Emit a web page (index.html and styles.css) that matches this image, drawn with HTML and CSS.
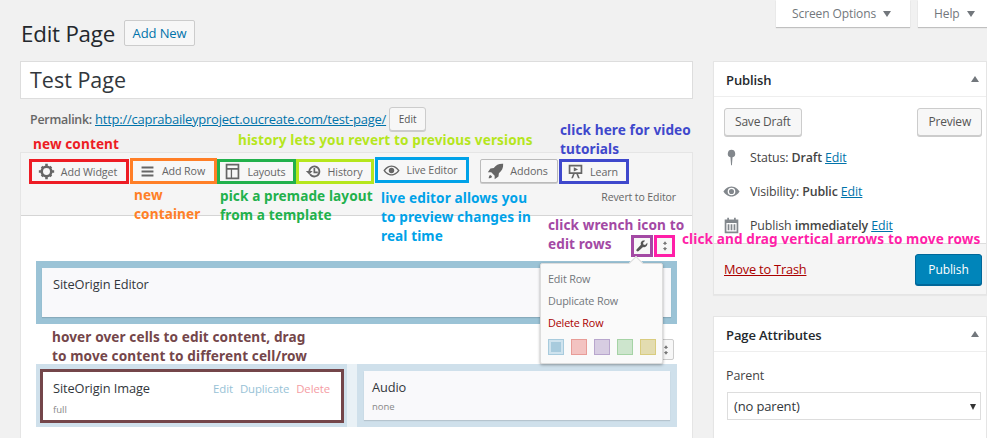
FILE: index.html
```html
<!DOCTYPE html>
<html lang="en">
<head>
<meta charset="utf-8">
<title>Edit Page</title>
<link rel="stylesheet" href="styles.css">
</head>
<body>
<div class="page">
  <div class="tabs">
    <div class="tab tab-screen">Screen Options <span class="caret"></span></div>
    <div class="tab tab-help">Help <span class="caret"></span></div>
  </div>
  <div class="head">
    <h1>Edit Page</h1>
    <a class="add-new">Add New</a>
  </div>
  <div class="columns">
    <main class="left">
      <div class="title-input">Test Page</div>
      <div class="permalink">
        <b>Permalink:</b> <a class="link">http://caprabaileyproject.oucreate.com/test-page/</a>
        <span class="small-btn">Edit</span>
      </div>
      <section class="builder">
        <div class="toolbar">
          <div class="tools">
            <span class="tool t-red">
              <svg class="ico" viewBox="0 0 20 20"><circle cx="10" cy="10" r="5.600" fill="none" stroke="#666" stroke-width="3"/><path d="M8.500 1h3v3h-3zM8.500 16h3v3h-3zM1 8.500h3v3H1zM16 8.500h3v3h-3zM3.300 5.400l2.100-2.100 2 2-2.100 2.100zM12.600 14.700l2.100-2.100 2 2-2.100 2.100zM14.600 3.300l2.100 2.100-2 2-2.100-2.100zM5.300 12.600l2.100 2.100-2 2-2.100-2.100z"/></svg>
              Add Widget</span>
            <span class="tool t-orange">
              <svg class="ico" viewBox="0 0 20 20"><path d="M3 4h14v2.400H3zM3 8.800h14v2.400H3zM3 13.600h14V16H3z"/></svg>
              Add Row</span>
            <span class="tool t-green">
              <svg class="ico" viewBox="0 0 20 20"><path d="M2 1h16v18H2zM4 3v3h12V3zM4 8v9h4V8zM9.500 8v9H16V8z" fill-rule="evenodd"/></svg>
              Layouts</span>
            <span class="tool t-lime">
              <svg class="ico" viewBox="0 0 20 20"><path d="M11 3a7 7 0 1 1-6 10.600l1.900-1.100A4.800 4.800 0 1 0 6.200 9.500H9L5 13.500 1 9.500h3A7 7 0 0 1 11 3zM10 6h2v4h3v2h-5z"/></svg>
              History</span>
            <span class="tool t-blue">
              <svg class="ico" viewBox="0 0 20 20"><path d="M10 4c4.500 0 8 3.500 9.500 6-1.500 2.500-5 6-9.500 6S2 12.500.5 10C2 7.500 5.500 4 10 4zm0 1.500C7 5.500 4 7.800 2.500 10 4 12.200 7 14.500 10 14.500s6-2.300 7.500-4.500C16 7.800 13 5.500 10 5.500zM10 6.800a3.200 3.200 0 1 1 0 6.400 3.200 3.200 0 0 1 0-6.400z" fill-rule="evenodd"/></svg>
              Live Editor</span>
            <span class="tool t-addons">
              <svg class="ico" viewBox="0 0 20 20"><path d="M19 1c.300 5-1.500 8.500-5 11l-.5 4-4.500 3v-4L5 11H1l3-4.500 4-.5c2.500-3.500 6-5.300 11-5zM3.500 14c1 0 2.500 1.500 2.500 2.500-1 1-2.500 1.500-4 1.500 0-1.500.5-3 1.500-4z"/></svg>
              Addons</span>
            <span class="tool t-indigo">
              <svg class="ico" viewBox="0 0 20 20"><path d="M2 2h16v11h-5l2 5h-2l-2-5H9l-2 5H5l2-5H2zM4 4v7h12V4zM8 5l5 2.500L8 10z" fill-rule="evenodd"/></svg>
              Learn</span>
          </div>
          <div class="revert">Revert to Editor</div>
        </div>
        <div class="rows">
          <div class="row-head row-head-first">
            <span class="row-ico r-wrench">
              <svg viewBox="0 0 20 20"><path d="M17.500 5.500l-3 3-2.500-.5-.5-2.500 3-3c-2-.7-4.500-.2-5.500 1.500-1 1.500-1 2.800-.5 4.200L2.500 14.500c-.8.800-.8 2 0 2.800s2 .8 2.800 0l6.200-6c1.400.5 2.800.5 4.200-.5 1.700-1.100 2.500-3.500 1.800-5.800z"/></svg>
            </span>
            <span class="row-ico r-arrows">
              <svg viewBox="0 0 20 20"><path d="M10 2l3.500 4.500H11v2H9v-2H6.500zM10 18l-3.500-4.500H9v-2h2v2h2.500z"/></svg>
            </span>
          </div>
          <div class="grid-row strong">
            <div class="cell cell-full">
              <div class="widget widget-tall"><div class="w-title">SiteOrigin Editor</div></div>
            </div>
          </div>
          <div class="row-head row-head-second">
            <span class="row-ico plain">
              <svg viewBox="0 0 20 20"><path d="M10 2l3.500 4.500H11v2H9v-2H6.500zM10 18l-3.500-4.500H9v-2h2v2h2.500z"/></svg>
            </span>
          </div>
          <div class="grid-row pale">
            <div class="cell cell-a">
              <div class="widget widget-marked">
                <div class="w-line">
                  <div class="w-title">SiteOrigin Image</div>
                  <div class="w-actions"><span>Edit</span><span>Duplicate</span><span class="del">Delete</span></div>
                </div>
                <div class="w-sub">full</div>
              </div>
            </div>
            <div class="cell cell-b">
              <div class="widget">
                <div class="w-title">Audio</div>
                <div class="w-sub">none</div>
              </div>
            </div>
          </div>
        </div>
      </section>
    </main>
    <aside class="side">
      <section class="box box-publish">
        <h2>Publish <span class="up"></span></h2>
        <div class="pub-actions">
          <span class="btn">Save Draft</span>
          <span class="btn">Preview</span>
        </div>
        <div class="pub-line">
          <svg class="mini" viewBox="0 0 20 20"><path d="M10 1a4.500 4.500 0 0 1 1.200 8.800L10.500 19h-1L8.800 9.800A4.500 4.500 0 0 1 10 1z"/></svg>
          <span>Status: <b>Draft</b> <a class="link">Edit</a></span>
        </div>
        <div class="pub-line">
          <svg class="mini" viewBox="0 0 20 20"><path d="M10 4c4.500 0 8 3.500 9.500 6-1.500 2.500-5 6-9.500 6S2 12.500.5 10C2 7.500 5.500 4 10 4zm0 1.500a4.500 4.500 0 1 0 0 9 4.500 4.500 0 0 0 0-9zM10 7a3 3 0 1 1 0 6 3 3 0 0 1 0-6z" fill-rule="evenodd"/></svg>
          <span>Visibility: <b>Public</b> <a class="link">Edit</a></span>
        </div>
        <div class="pub-line">
          <svg class="mini" viewBox="0 0 20 20"><path d="M2 3h3V1h2v2h6V1h2v2h3v16H2zM4 7v10h12V7zM5.500 8.500h2v7h-2zM9 8.500h2v7H9zM12.500 8.500h2v7h-2z" fill-rule="evenodd"/></svg>
          <span>Publish <b>immediately</b> <a class="link">Edit</a></span>
        </div>
        <div class="pub-foot">
          <a class="trash">Move to Trash</a>
          <span class="primary">Publish</span>
        </div>
      </section>
      <section class="box box-attrs">
        <h2>Page Attributes <span class="up"></span></h2>
        <div class="attrs">
          <div class="attr-label">Parent</div>
          <div class="select">(no parent)<span class="down"></span></div>
        </div>
      </section>
    </aside>
  </div>

  <div class="menu">
    <span class="menu-tip"></span>
    <div class="menu-item">Edit Row</div>
    <div class="menu-item">Duplicate Row</div>
    <div class="menu-item danger">Delete Row</div>
    <div class="swatches">
      <span class="sw sw-blue"></span>
      <span class="sw sw-red"></span>
      <span class="sw sw-purple"></span>
      <span class="sw sw-green"></span>
      <span class="sw sw-yellow"></span>
    </div>
  </div>

  <div class="note n-red">new content</div>
  <div class="note n-lime">history lets you revert to previous versions</div>
  <div class="note n-indigo">click here for video<br>tutorials</div>
  <div class="note n-orange">new<br>container</div>
  <div class="note n-green">pick a premade layout<br>from a template</div>
  <div class="note n-blue">live editor allows you<br>to preview changes in<br>real time</div>
  <div class="note n-purple">click wrench icon to<br>edit rows</div>
  <div class="note n-pink">click and drag vertical arrows to move rows</div>
  <div class="note n-maroon">hover over cells to edit content, drag<br>to move content to different cell/row</div>
</div>
</body>
</html>
```

FILE: styles.css
```css
* { box-sizing: border-box; }
html, body { margin: 0; height: 100%; }
body {
  background: #f1f1f1;
  color: #444;
  font-family: "Open Sans", "Noto Sans", sans-serif;
  font-size: 12px;
  overflow: hidden;
}
.page { position: relative; width: 987px; height: 438px; overflow: hidden; }
a { color: #0073aa; }
.link { color: #0073aa; text-decoration: underline; }

/* top tabs */
.tabs { display: flex; justify-content: flex-end; gap: 8px; height: 27px; }
.tab {
  background: #fff;
  box-shadow: 0 1px 1px rgba(0,0,0,.2);
  color: #72777c;
  font-size: 12px;
  letter-spacing: -.1px;
  line-height: 27px;
  display: flex;
  align-items: center;
  padding-left: 16px;
}
.tab-screen { width: 134px; }
.tab-help { width: 69px; }
.caret {
  display: inline-block;
  margin-left: 7px;
  border: 4px solid transparent;
  border-top: 6px solid #72777c;
  border-bottom: 0;
  width: 0;
}

/* heading */
.head { display: flex; align-items: center; height: 26px; margin: -7px 0 0 21px; }
h1 { margin: 0; font-weight: 400; font-size: 22.300px; line-height: 28px; padding-top: 2px; color: #23282d; letter-spacing: -.2px; }
.add-new {
  margin-left: 9px;
  width: 71px;
  height: 26px;
  border: 1px solid #ccc;
  border-radius: 2px;
  background: #f7f7f7;
  text-align: center;
  line-height: 24px;
  font-size: 13px;
  letter-spacing: -.1px;
  color: #0073aa;
}

/* columns */
.columns { display: flex; gap: 21px; margin: 15px 0 0 20px; align-items: flex-start; }
.left { width: 673px; flex: none; }
.side { width: 273px; flex: none; margin-left: -1px; }

.title-input {
  height: 38px;
  background: #fff;
  border: 1px solid #ddd;
  font-size: 21.500px;
  line-height: 36px;
  padding-left: 9px;
  color: #32373c;
}
.permalink {
  display: flex;
  align-items: center;
  gap: 3px;
  height: 24px;
  margin: 8px 0 0 10px;
  font-size: 13px;
  letter-spacing: -.24px;
  color: #666;
}
.permalink b { font-weight: 600; font-size: 12.400px; letter-spacing: -.24px; }
.small-btn {
  width: 37px;
  height: 24px;
  border: 1px solid #ccc;
  border-radius: 3px;
  background: #f7f7f7;
  box-shadow: 0 1px 0 #ccc;
  text-align: center;
  line-height: 22px;
  font-size: 10px;
  letter-spacing: 0;
  color: #555;
}

/* builder */
.builder {
  margin-top: 21px;
  height: 300px;
  background: #fff;
  border: 1px solid #e5e5e5;
}
.toolbar {
  height: 63px;
  background: #f5f5f5;
  border-bottom: 1px solid #d5d5d5;
  position: relative;
}
.tools { display: flex; align-items: flex-start; padding: 6px 0 0 8px; }
.tool {
  display: flex;
  align-items: center;
  justify-content: center;
  gap: 6px;
  height: 25px;
  border: 3px solid #999;
  background: #f7f7f7;
  color: #666;
  font-size: 10.700px;
  letter-spacing: -.1px;
  padding-right: 3px;
}
.ico { width: 17px; height: 17px; fill: #666; flex: none; }
.t-red { width: 100px; border-color: #ed1c24; }
.t-orange { width: 87px; border-color: #ff7f27; margin-left: 1px; margin-top: -1px; height: 26px; }
.t-green { width: 79px; border-color: #22b14c; }
.t-lime { width: 78px; border-color: #b5e61d; }
.t-blue { width: 94px; border-color: #00a2e8; margin-left: 1px; margin-top: -2px; height: 26px; }
.t-addons { width: 78px; border: 1px solid #bbb; border-radius: 2px; margin-left: 11px; height: 24px; box-shadow: 0 1px 0 #ccc; }
.t-indigo { width: 70px; border-color: #3f48cc; margin-left: 1px; }
.revert {
  position: absolute;
  right: 16px;
  top: 37px;
  font-size: 10.500px;
  letter-spacing: -.1px;
  color: #666;
}

.rows { padding: 0 15px; }
.row-head { display: flex; justify-content: flex-end; align-items: flex-start; }
.row-head-first { height: 45px; padding-top: 19px; padding-right: 2px; }
.row-head-second { height: 40px; padding-top: 15px; padding-right: 3px; }
.row-ico { display: flex; align-items: center; justify-content: center; }
.row-ico svg { width: 14px; height: 14px; fill: #555; }
.r-wrench { width: 22px; height: 22px; border: 3px solid #a349a4; background: #f7f7f7; }
.r-arrows { width: 21px; height: 22px; border: 3px solid #ff1fa8; background: #f7f7f7; margin-left: 1px; }
.r-arrows svg { width: 12px; height: 12px; fill: #777; }
.plain { width: 16px; height: 21px; border: 1px solid #ccc; border-radius: 2px; background: #f7f7f7; }
.plain svg { width: 12px; height: 12px; fill: #777; }

.grid-row { display: flex; height: 63px; width: 641px; }
.strong { background: #9bc3d6; }
.pale { background: #e9f1f6; gap: 10px; }
.cell { padding: 7px 6px; }
.cell-full { width: 100%; }
.cell-a { width: 311px; background: #cfe0eb; padding: 5px 3px 4px 4px; }
.cell-b { width: 320px; background: #cfe0eb; padding: 7px; }
.widget {
  height: 49px;
  background: #f9f9fb;
  box-shadow: 0 1px 1px rgba(0,0,0,.12);
  padding: 7px 8px;
}
.widget-tall { height: 49px; padding: 7px 11px; }
.widget-marked { height: 54px; border: 3px solid #74464a; background: #fff; padding: 7px 10px 0; box-shadow: none; }
.w-line { display: flex; justify-content: space-between; align-items: flex-start; }
.w-title { font-size: 12.800px; line-height: 18px; color: #32373c; letter-spacing: -.1px; }
.w-sub { font-size: 9.500px; line-height: 14px; margin-top: 4px; color: #888; }
.w-actions { display: flex; gap: 7px; font-size: 11.400px; line-height: 20px; color: #97c2d6; padding-right: 1px; letter-spacing: -.1px; }
.del { color: #f59ca3; }

/* floating row menu */
.menu {
  position: absolute;
  left: 540px;
  top: 263px;
  width: 123px;
  height: 101px;
  background: #fafafa;
  border: 1px solid #ddd;
  border-radius: 2px;
  box-shadow: 0 1px 3px rgba(0,0,0,.35);
  padding: 5px 7px 0;
}
.menu-tip {
  position: absolute;
  left: 90px;
  top: -6px;
  width: 10px;
  height: 10px;
  background: #fafafa;
  transform: rotate(45deg);
  border-left: 1px solid #ddd;
  border-top: 1px solid #ddd;
}
.menu-item { height: 22px; line-height: 20px; font-size: 10.800px; letter-spacing: -.15px; color: #72777c; position: relative; }
.danger { color: #a00; }
.swatches { display: flex; gap: 7px; margin-top: 4px; }
.sw { width: 16px; height: 16px; border: 1px solid; display: block; flex: none; }
.sw-blue { background: #a8cbdd; border-color: #a8cbdd; box-shadow: inset 0 0 0 2px #cfe3ee; }
.sw-red { background: #f3c3c1; border-color: #e89c97; }
.sw-purple { background: #d7cde2; border-color: #b8a6cd; }
.sw-green { background: #cde5cd; border-color: #a5d3a5; }
.sw-yellow { background: #e3dcb0; border-color: #d9cc7f; }

/* side */
.box { background: #fff; border: 1px solid #e5e5e5; width: 274px; box-shadow: 0 1px 1px rgba(0,0,0,.04); }
.box h2 {
  margin: 0;
  height: 35px;
  border-bottom: 1px solid #eee;
  font-size: 13px;
  font-weight: 600;
  line-height: 37px;
  padding-left: 12px;
  color: #23282d;
  position: relative;
  letter-spacing: -.1px;
}
.up {
  position: absolute;
  right: 7px;
  top: 14px;
  border: 4px solid transparent;
  border-bottom: 6px solid #72777c;
  border-top: 0;
}
.box-publish { height: 234px; position: relative; }
.pub-actions { display: flex; justify-content: space-between; padding: 11px 4px 0 10px; }
.btn {
  height: 28px;
  border: 1px solid #ccc;
  border-radius: 3px;
  background: #f7f7f7;
  box-shadow: 0 1px 0 #ccc;
  padding: 0 10px;
  line-height: 26px;
  font-size: 12px;
  letter-spacing: -.2px;
  color: #555;
}
.pub-line {
  display: flex;
  align-items: center;
  gap: 10px;
  height: 34px;
  padding-left: 9px;
  font-size: 12.400px;
  letter-spacing: -.12px;
  color: #444;
}
.pub-actions + .pub-line { margin-top: 4px; }
.pub-line b { font-weight: 600; color: #444; }
.pub-line:last-of-type b { font-weight: 400; }
.mini { width: 17px; height: 17px; fill: #82878c; flex: none; }
.pub-foot {
  position: absolute;
  left: 0; right: 0; bottom: 0;
  height: 51px;
  background: #f5f5f5;
  border-top: 1px solid #ddd;
  display: flex;
  align-items: center;
  justify-content: space-between;
  padding: 0 4px 0 10px;
}
.trash { color: #a00; text-decoration: underline; font-size: 12.800px; letter-spacing: -.2px; }
.primary {
  width: 67px;
  height: 31px;
  background: #0085ba;
  border: 1px solid #006799;
  border-radius: 3px;
  box-shadow: 0 1px 0 #006799;
  text-align: center;
  line-height: 29px;
  color: #fff;
  font-size: 12px;
  letter-spacing: -.1px;
}
.box-attrs { margin-top: 21px; height: 140px; }
.attrs { padding: 15px 0 0 12px; }
.attr-label { font-size: 12.500px; line-height: 18px; color: #444; letter-spacing: -.1px; }
.select {
  position: relative;
  width: 254px;
  height: 28px;
  margin: 7px 0 0 1px;
  border: 1px solid #ddd;
  background: #fff;
  line-height: 26px;
  font-size: 13px;
  letter-spacing: -.15px;
  padding-left: 6px;
  color: #32373c;
}
.down {
  position: absolute;
  right: 4px;
  top: 11px;
  border: 3px solid transparent;
  border-top: 6px solid #333;
  border-bottom: 0;
}

/* annotations drawn over the screenshot */
.note {
  position: absolute;
  font-family: "Noto Sans", "Open Sans", sans-serif;
  font-weight: 700;
  font-size: 13.600px;
  line-height: 19px;
  letter-spacing: .1px;
  white-space: nowrap;
}
.n-red { left: 33px; top: 134px; color: #ed1c24; }
.n-lime { left: 238px; top: 130px; color: #b5e61d; }
.n-indigo { left: 560px; top: 120px; color: #3f48cc; }
.n-orange { left: 134px; top: 185px; color: #ff7f27; }
.n-green { left: 220px; top: 186px; color: #22b14c; }
.n-blue { left: 381px; top: 188px; color: #00a2e8; }
.n-purple { left: 548px; top: 215px; color: #a349a4; }
.n-pink { left: 682px; top: 232px; line-height: 13px; color: #ff1fa8; }
.n-maroon { left: 52px; top: 327px; color: #74464a; }
```
